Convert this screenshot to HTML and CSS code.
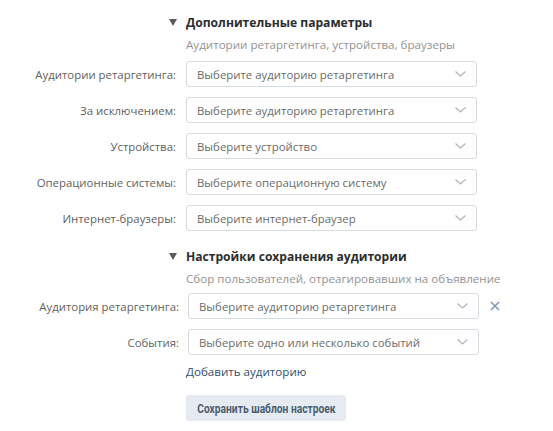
FILE: index.html
```html
<!DOCTYPE html>
<html lang="ru">
<head>
<meta charset="utf-8">
<link rel="stylesheet" href="styles.css">
</head>
<body>
<div class="page">
  <section class="section s1">
    <div class="head">
      <svg class="tri" width="8" height="7" viewBox="0 0 8 7"><path d="M0 0H8L4 7Z" fill="#5a5a5a"/></svg>
      <div class="head-text">
        <div class="title">Дополнительные параметры</div>
        <div class="subtitle">Аудитории ретаргетинга, устройства, браузеры</div>
      </div>
    </div>
    <div class="row"><div class="label">Аудитории ретаргетинга:</div><div class="select"><span>Выберите аудиторию ретаргетинга</span><svg class="chev" width="11" height="6" viewBox="0 0 11 6"><polyline points="0.5,0.5 5.5,5 10.5,0.5" fill="none" stroke="#aab4bf" stroke-width="1.2"/></svg></div></div>
    <div class="row"><div class="label">За исключением:</div><div class="select"><span>Выберите аудиторию ретаргетинга</span><svg class="chev" width="11" height="6" viewBox="0 0 11 6"><polyline points="0.5,0.5 5.5,5 10.5,0.5" fill="none" stroke="#aab4bf" stroke-width="1.2"/></svg></div></div>
    <div class="row"><div class="label">Устройства:</div><div class="select"><span>Выберите устройство</span><svg class="chev" width="11" height="6" viewBox="0 0 11 6"><polyline points="0.5,0.5 5.5,5 10.5,0.5" fill="none" stroke="#aab4bf" stroke-width="1.2"/></svg></div></div>
    <div class="row"><div class="label">Операционные системы:</div><div class="select"><span>Выберите операционную систему</span><svg class="chev" width="11" height="6" viewBox="0 0 11 6"><polyline points="0.5,0.5 5.5,5 10.5,0.5" fill="none" stroke="#aab4bf" stroke-width="1.2"/></svg></div></div>
    <div class="row"><div class="label">Интернет-браузеры:</div><div class="select"><span>Выберите интернет-браузер</span><svg class="chev" width="11" height="6" viewBox="0 0 11 6"><polyline points="0.5,0.5 5.5,5 10.5,0.5" fill="none" stroke="#aab4bf" stroke-width="1.2"/></svg></div></div>
  </section>
  <section class="section s2">
    <div class="head">
      <svg class="tri" width="8" height="7" viewBox="0 0 8 7"><path d="M0 0H8L4 7Z" fill="#5a5a5a"/></svg>
      <div class="head-text">
        <div class="title">Настройки сохранения аудитории</div>
        <div class="subtitle">Сбор пользователей, отреагировавших на объявление</div>
      </div>
    </div>
    <div class="row row2"><div class="label">Аудитория ретаргетинга:</div><div class="select"><span>Выберите аудиторию ретаргетинга</span><svg class="chev" width="11" height="6" viewBox="0 0 11 6"><polyline points="0.5,0.5 5.5,5 10.5,0.5" fill="none" stroke="#aab4bf" stroke-width="1.2"/></svg></div><svg class="close" width="10" height="10" viewBox="0 0 10 10"><path d="M1 1L9 9M9 1L1 9" stroke="#7f9ab4" stroke-width="1.6" fill="none"/></svg></div>
    <div class="row row2"><div class="label">События:</div><div class="select"><span>Выберите одно или несколько событий</span><svg class="chev" width="11" height="6" viewBox="0 0 11 6"><polyline points="0.5,0.5 5.5,5 10.5,0.5" fill="none" stroke="#aab4bf" stroke-width="1.2"/></svg></div></div>
    <div class="actions">
      <a class="add-link">Добавить аудиторию</a>
      <button class="btn"><span class="btn-text">Сохранить шаблон настроек</span></button>
    </div>
  </section>
</div>
</body>
</html>
```
FILE: styles.css
```css
html, body {
  margin: 0;
  padding: 0;
  background: #ffffff;
}
body {
  font-family: "Open Sans", "Noto Sans", sans-serif;
  font-size: 11.4px;
  color: #656565;
}
.page {
  padding-top: 14px;
}
.head {
  display: flex;
  align-items: flex-start;
  padding-left: 169px;
}
.tri {
  display: block;
  margin-top: 5px;
  margin-right: 9px;
}
.title {
  font-weight: 700;
  font-size: 12.1px;
  line-height: 18px;
  color: #2c2d2e;
}
.subtitle {
  margin-top: 4px;
  line-height: 18px;
  color: #939393;
  font-size: 11.6px;
}
.s1 .head { margin-bottom: 7px; }
.row {
  display: grid;
  grid-template-columns: 176px 291px;
  column-gap: 10px;
  align-items: center;
  margin-bottom: 10px;
}
.row2 {
  grid-template-columns: 179px 291px 20px;
  column-gap: 9px;
}
.label {
  text-align: right;
  white-space: nowrap;
  color: #5f5f5f;
}
.select {
  height: 26px;
  box-sizing: border-box;
  border: 1px solid #d5dbe1;
  border-radius: 3px;
  display: flex;
  align-items: center;
  justify-content: space-between;
  padding: 0 10px 0 10px;
  color: #6b6b6b;
}
.chev { display: block; }
.close { display: block; margin-left: 2px; }
.s2 { margin-top: 17px; }
.s2 .head { margin-bottom: 5px; }
.actions {
  padding-left: 186px;
  display: flex;
  flex-direction: column;
  align-items: flex-start;
  margin-top: -2px;
}
.add-link {
  line-height: 18px;
  color: #2f4f73;
  cursor: pointer;
  font-size: 11.6px;
}
.btn {
  margin-top: 14px;
  width: 160px;
  height: 26px;
  border: none;
  border-radius: 3px;
  background: #e5ebf1;
  color: #4d5d70;
  font-family: "Roboto", sans-serif;
  font-weight: 700;
  font-size: 12.5px;
  padding: 0;
  display: flex;
  align-items: center;
  justify-content: center;
}
.btn-text {
  display: inline-block;
  transform: scaleX(0.82);
  white-space: nowrap;
}
```
